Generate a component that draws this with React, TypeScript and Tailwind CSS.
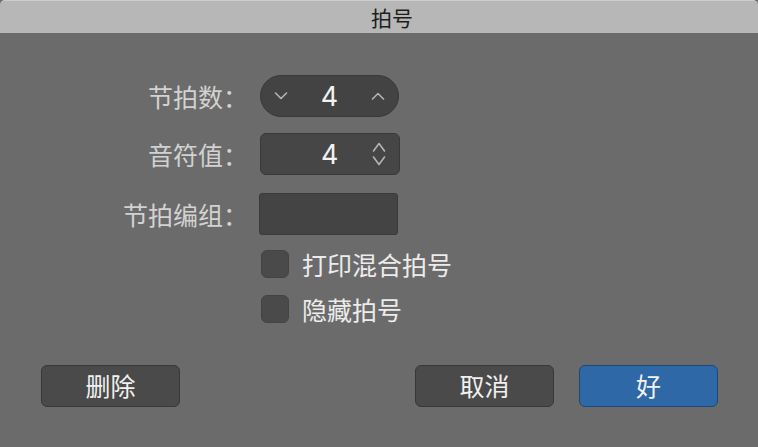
import React from "react";

const cjk = { fontFamily: '"Noto Sans CJK SC", "Noto Sans", sans-serif' };
const num = { fontFamily: 'Inter, "Noto Sans", sans-serif' };

function Chevron({ up, tall }: { up?: boolean; tall?: boolean }) {
  const h = tall ? 10 : 8;
  return (
    <svg width="14" height={h} viewBox={`0 0 14 ${h}`}>
      <path
        d={
          up
            ? `M1.5 ${h - 1} L7 1.5 L12.5 ${h - 1}`
            : `M1.5 1 L7 ${h - 1.5} L12.5 1`
        }
        fill="none"
        stroke="#b4b4b4"
        strokeWidth="1.6"
        strokeLinecap="round"
        strokeLinejoin="round"
      />
    </svg>
  );
}

function Row({ label, children }: { label: string; children: React.ReactNode }) {
  return (
    <div className="flex items-center h-[42px]">
      <div className="w-[248px] text-right text-[25px] leading-none text-[#d2d2d2]" style={cjk}>
        {label}
      </div>
      <div className="ml-[12px]">{children}</div>
    </div>
  );
}

function Check({ label }: { label: string }) {
  return (
    <div className="flex items-center h-[28px] pl-[261px]">
      <div className="w-[28px] h-[28px] rounded-[6px] bg-[#4a4a4a] border border-[#444444]" />
      <span className="ml-[13px] text-[25px] leading-none text-[#ececec]" style={cjk}>
        {label}
      </span>
    </div>
  );
}

function Button({ label, primary }: { label: string; primary?: boolean }) {
  return (
    <button
      className={
        primary
          ? "w-[139px] h-[42px] rounded-[6px] bg-[#2f68a6] border border-[#1f4773] text-[25px] text-[#f2f2f2] flex items-center justify-center"
          : "w-[139px] h-[42px] rounded-[6px] bg-[#4a4a4a] border border-[#383838] text-[25px] text-[#f0f0f0] flex items-center justify-center"
      }
      style={cjk}
    >
      {label}
    </button>
  );
}

export default function App() {
  return (
    <div className="w-[758px] h-[447px] bg-[#6b6b6b] flex flex-col overflow-hidden">
      <div className="h-[33px] bg-[#b7b7b7] border-t border-[#cccccc] rounded-t-[5px] flex items-center justify-center pl-[26px]">
        <span className="text-[21px] leading-none text-[#1e1e1e]" style={cjk}>
          拍号
        </span>
      </div>

      <div className="flex flex-col mt-[42px]">
        <Row label="节拍数：">
          <div className="w-[139px] h-[42px] rounded-full bg-[#434343] border border-[#3a3a3a] flex items-center justify-between px-[13px]">
            <Chevron />
            <span className="text-[27px] leading-none text-[#f2f2f2]" style={num}>
              4
            </span>
            <Chevron up />
          </div>
        </Row>

        <div className="mt-[16px]">
          <Row label="音符值：">
            <div className="w-[140px] h-[42px] rounded-[6px] bg-[#464646] border border-[#393939] flex items-center">
              <span className="ml-[60px] text-[27px] leading-none text-[#f2f2f2]" style={num}>
                4
              </span>
              <div className="ml-auto mr-[13px] flex flex-col gap-[4px]">
                <Chevron up tall />
                <Chevron tall />
              </div>
            </div>
          </Row>
        </div>

        <div className="mt-[18px]">
          <Row label="节拍编组：">
            <div className="-ml-[1px] w-[139px] h-[42px] rounded-[3px] bg-[#444444] border border-[#3a3a3a]" />
          </Row>
        </div>

        <div className="mt-[15px]">
          <Check label="打印混合拍号" />
        </div>
        <div className="mt-[17px]">
          <Check label="隐藏拍号" />
        </div>

        <div className="mt-[42px] flex items-center pl-[41px] pr-[40px]">
          <Button label="删除" />
          <div className="ml-auto flex gap-[25px]">
            <Button label="取消" />
            <Button label="好" primary />
          </div>
        </div>
      </div>
    </div>
  );
}
